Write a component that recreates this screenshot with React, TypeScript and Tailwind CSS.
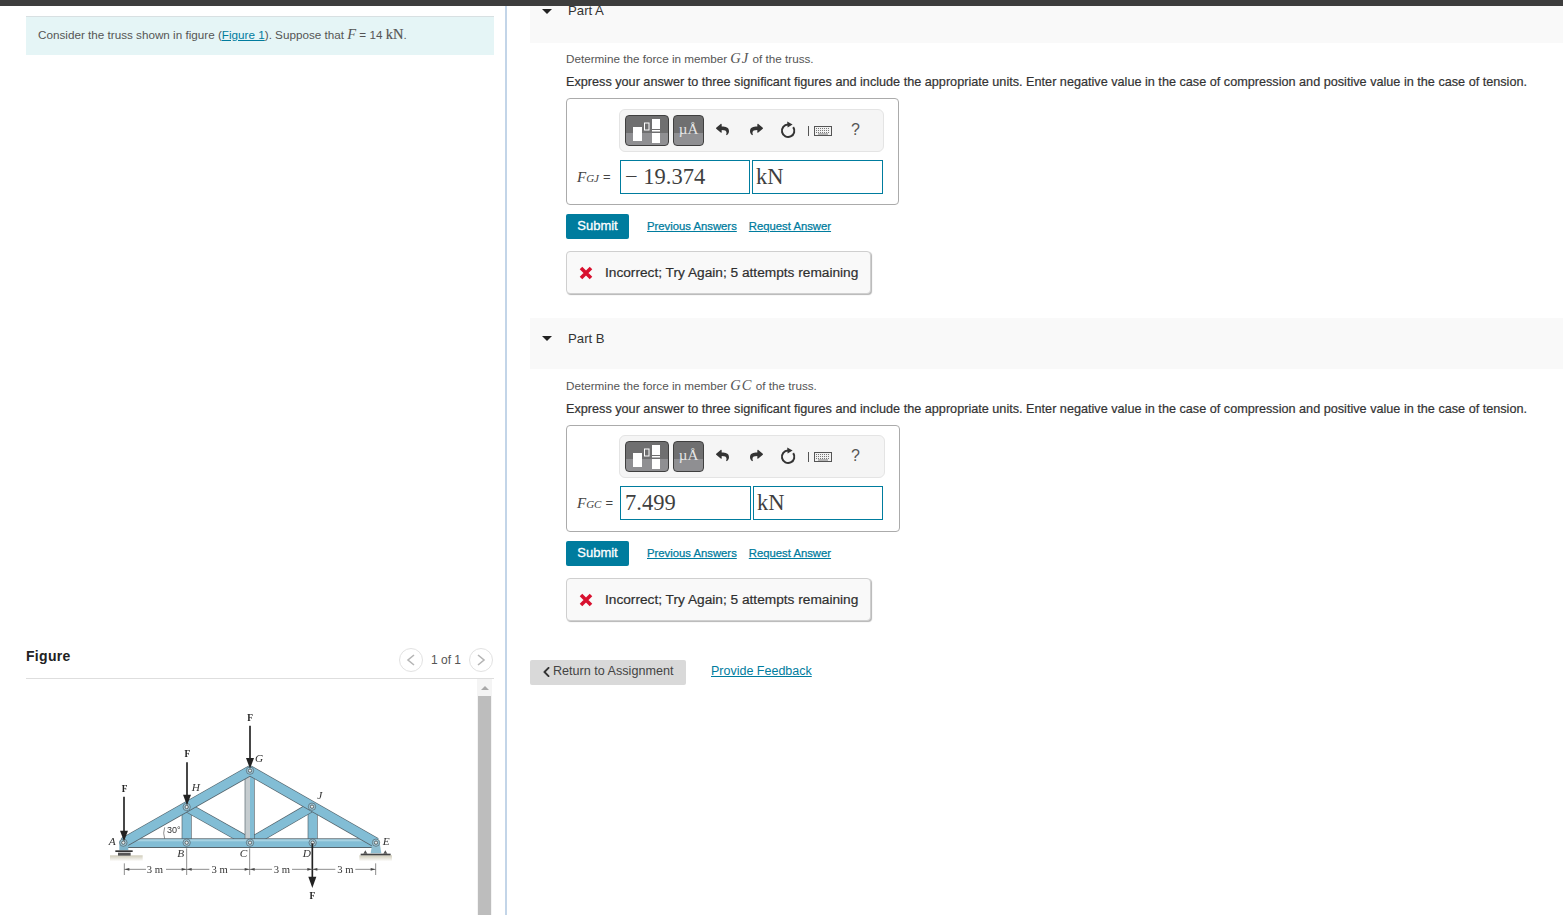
import { FaChevronLeft, FaReply, FaShare } from "react-icons/fa";

const SANS = "font-['Liberation_Sans',Arial,sans-serif]";
const SERIF = "font-['Liberation_Serif','Times_New_Roman',serif]";

function Mi({ children }: { children: string }) {
  return <span className={`${SERIF} text-[14.5px] italic leading-none tracking-[1px]`}>{children}</span>;
}

function TemplateIcons() {
  return (
    <div className="flex items-center gap-[4px]">
      <div className="relative flex h-[31px] w-[44px] items-center justify-center overflow-hidden rounded-[4px] border border-[#3f3f3f] bg-[linear-gradient(#6f6f70_0%,#6f6f70_58%,#8f8f92_58%,#8f8f92_100%)]">
        <svg width="30" height="26" viewBox="0 0 30 26">
          <rect x="1" y="9" width="9" height="14" fill="#fff" />
          <rect x="12.5" y="5" width="4.5" height="7" fill="none" stroke="#fff" strokeWidth="1" />
          <rect x="20" y="1" width="8" height="10" fill="#fff" />
          <rect x="20" y="12" width="8" height="1.5" fill="#fff" />
          <rect x="20" y="15" width="8" height="10" fill="#fff" />
        </svg>
      </div>
      <div className={`flex h-[31px] w-[31px] items-center justify-center rounded-[4px] border border-[#3f3f3f] bg-[linear-gradient(#6f6f70_0%,#6f6f70_58%,#8f8f92_58%,#8f8f92_100%)] ${SERIF} text-[15px] leading-none text-[#e6e6e6]`}>
        <span className="mb-[2px]">µÅ</span>
      </div>
    </div>
  );
}

function ResetIcon() {
  return (
    <svg width="16" height="18" viewBox="0 0 16 18" fill="none">
      <path d="M8 3.6 A6.2 6.2 0 1 0 13.2 6.2" stroke="#333" strokeWidth="2" />
      <path d="M7.2 0.4 L12.6 3.4 L7.6 6.6 Z" fill="#333" />
    </svg>
  );
}

function KeyboardIcon() {
  return (
    <svg width="24" height="12" viewBox="0 0 24 12" className="shrink-0">
      <rect x="0" y="1" width="1" height="10" fill="#555" />
      <rect x="6.5" y="1.5" width="17" height="9" fill="#f2f2f2" stroke="#555" />
      <path d="M8 3.5h14M8 5.5h14M8 7.5h14" stroke="#777" strokeWidth="1" strokeDasharray="1 1" />
      <rect x="10" y="8.5" width="10" height="1" fill="#777" />
    </svg>
  );
}

function AnswerBox({
  symbol,
  sub,
  value,
  inputWidth,
  unitWidth,
  boxClass,
  toolbarWidth,
}: {
  symbol: string;
  sub: string;
  value: string;
  inputWidth: string;
  unitWidth: string;
  boxClass: string;
  toolbarWidth: string;
}) {
  return (
    <div className={`${boxClass} h-[107px] rounded-[4px] border border-[#ababab] bg-white pl-[10px]`}>
      <div className={`ml-[42px] flex h-[43px] ${toolbarWidth} items-center rounded-[6px] border border-[#e4e4e4] bg-[#f5f5f5] pl-[5px]`}>
        <TemplateIcons />
        <FaReply className="mb-[2px] ml-[12px] h-[13px] w-[13px] text-[#333]" />
        <FaShare className="mb-[2px] ml-[21px] h-[13px] w-[13px] text-[#333]" />
        <div className="mb-[2px] ml-[17px]">
          <ResetIcon />
        </div>
        <div className="ml-[12px]">
          <KeyboardIcon />
        </div>
        <span className={`ml-[19px] mb-[2px] ${SANS} text-[16px] leading-none text-[#555]`}>?</span>
      </div>
      <div className="mt-[8px] flex h-[34px] items-center">
        <div className="flex w-[43px] items-center text-[#444]">
          <span className={`${SERIF} text-[15px] italic`}>{symbol}</span>
          <span className={`${SERIF} mt-[3px] text-[11px] italic`}>{sub}</span>
          <span className={`${SANS} ml-[4px] text-[13px]`}>=</span>
        </div>
        <div className={`${inputWidth} flex h-[34px] items-center border border-[#007c9e] pb-[1px] pl-[4px] ${SERIF} text-[22.5px] text-[#3f3f3f]`}>
          {value}
        </div>
        <div className={`${unitWidth} ml-[2px] flex h-[34px] items-center border border-[#007c9e] pb-[1px] pl-[3px] ${SERIF} text-[22.5px] text-[#3f3f3f]`}>
          kN
        </div>
      </div>
    </div>
  );
}

function SubmitRow() {
  return (
    <div className="flex h-[25px] items-center">
      <button type="button" className="h-[25px] w-[63px] rounded-[2px] bg-[#007c9e] pb-[2px] text-[13px] text-white [-webkit-text-stroke:0.3px_#fff]">
        Submit
      </button>
      <a className="ml-[18px] text-[11.3px] text-[#007c9e] underline [-webkit-text-stroke:0.25px_#007c9e]">Previous Answers</a>
      <a className="ml-[12px] text-[11.3px] text-[#007c9e] underline [-webkit-text-stroke:0.25px_#007c9e]">Request Answer</a>
    </div>
  );
}

function Feedback() {
  return (
    <div className="flex h-[43px] w-[305px] items-center rounded-[4px] border border-[#cfcfcf] bg-[#f9f9f9] pl-[12px] shadow-[1px_1px_1px_#b5b5b5]">
      <svg width="14" height="14" viewBox="0 0 14 14">
        <path d="M2 2 L12 12 M12 2 L2 12" stroke="#d8112f" strokeWidth="3.6" />
      </svg>
      <span className="ml-[12px] pt-[1px] text-[13.7px] text-[#2f2f2f] [-webkit-text-stroke:0.2px_#2f2f2f]">Incorrect; Try Again; 5 attempts remaining</span>
    </div>
  );
}

function Caret() {
  return <span className="h-0 w-0 border-x-[5px] border-t-[5px] border-x-transparent border-t-[#222]" />;
}

function Instructions({ member }: { member: string }) {
  return (
    <>
      <p className="h-[18px] text-[11.7px] leading-[18px] text-[#555]">
        Determine the force in member <Mi>{member}</Mi> of the truss.
      </p>
      <p className="mt-[5px] text-[12.67px] leading-[18px] text-[#333] [-webkit-text-stroke:0.2px_#333]">
        Express your answer to three significant figures and include the appropriate units. Enter negative value in the case of compression and positive value in the case of tension.
      </p>
    </>
  );
}

function Truss() {
  const blue = "#82bdd5";
  const edge = "#55646c";
  const members: [number, number, number, number][] = [
    [290, 321, 290, 428],
    [668, 320, 668, 428],
    [290, 321, 480, 428],
    [666, 320, 480, 428],
  ];
  const pins: [number, number][] = [
    [100, 428],
    [290, 428],
    [480, 428],
    [668, 428],
    [858, 428],
    [290, 321],
    [480, 212],
    [666, 320],
  ];
  const arrows: [number, number, number][] = [
    [102, 290, 424],
    [291, 187, 316],
    [480, 77, 206],
  ];
  return (
    <svg width="320" height="215" viewBox="0 0 960 645" className="blur-[0.3px]">
      <defs>
        <linearGradient id="ground" x1="0" y1="0" x2="0" y2="1">
          <stop offset="0" stopColor="#cfcbb8" />
          <stop offset="1" stopColor="#ffffff" />
        </linearGradient>
      </defs>
      <rect x="60" y="466" width="98" height="18" fill="url(#ground)" />
      <rect x="808" y="466" width="98" height="18" fill="url(#ground)" />
      {members.map(([x1, y1, x2, y2], i) => (
        <g key={i}>
          <line x1={x1} y1={y1} x2={x2} y2={y2} stroke={edge} strokeWidth="30" />
          <line x1={x1} y1={y1} x2={x2} y2={y2} stroke={blue} strokeWidth="26" />
        </g>
      ))}
      <rect x="464" y="212" width="30" height="216" fill={edge} />
      <rect x="466" y="212" width="14" height="216" fill="#c5cccf" />
      <rect x="480" y="212" width="12" height="216" fill={blue} />
      <rect x="100" y="415" width="758" height="29" fill={edge} />
      <rect x="100" y="418" width="758" height="23" fill={blue} />
      <rect x="100" y="418" width="758" height="6" fill="#a7d2e2" />
      <path d="M100 428 L480 212 L858 428" fill="none" stroke={edge} strokeWidth="31" strokeLinejoin="round" />
      <path d="M100 428 L480 212 L858 428" fill="none" stroke={blue} strokeWidth="27" strokeLinejoin="round" />
      <rect x="88" y="422" width="27" height="29" fill="#7fb4ca" />
      <rect x="76" y="451" width="52" height="5" fill="#333" />
      <rect x="84" y="458" width="38" height="9" fill="#555" />
      <path d="M842 460 L848 422 L868 422 L874 460 Z" fill="#8fbfd2" />
      <rect x="812" y="461" width="90" height="5" fill="#444" />
      <path d="M820 461 l6 -10 l6 10 Z M880 461 l6 -10 l6 10 Z" fill="#555" />
      {pins.map(([x, y], i) => (
        <g key={i}>
          <circle cx={x} cy={y} r="11" fill="#9cc7d8" stroke="#4f5f68" strokeWidth="2" />
          <circle cx={x} cy={y} r="5" fill="#e6eef0" stroke="#333" strokeWidth="2" />
        </g>
      ))}
      {arrows.map(([x, y1, y2], i) => (
        <g key={i}>
          <line x1={x} y1={y1} x2={x} y2={y2 - 20} stroke="#222" strokeWidth="5" />
          <path d={`M${x - 12} ${y2 - 32} L${x + 12} ${y2 - 32} L${x} ${y2} Z`} fill="#222" />
        </g>
      ))}
      <line x1="667" y1="430" x2="667" y2="540" stroke="#222" strokeWidth="5" />
      <path d="M655 530 L679 530 L667 564 Z" fill="#222" />
      <g stroke="#555" strokeWidth="2">
        <line x1="103" y1="490" x2="103" y2="525" />
        <line x1="290" y1="445" x2="290" y2="525" />
        <line x1="479" y1="445" x2="479" y2="525" />
        <line x1="857" y1="490" x2="857" y2="525" />
        <line x1="103" y1="508" x2="168" y2="508" />
        <line x1="228" y1="508" x2="358" y2="508" />
        <line x1="420" y1="508" x2="546" y2="508" />
        <line x1="606" y1="508" x2="736" y2="508" />
        <line x1="796" y1="508" x2="857" y2="508" />
        <path d="M224 382 Q 218 400 224 416" fill="none" />
      </g>
      <path d="M104 508 l14 -4 v8 Z M289 508 l-14 -4 v8 Z M291 508 l14 -4 v8 Z M478 508 l-14 -4 v8 Z M480 508 l14 -4 v8 Z M666 508 l-14 -4 v8 Z M668 508 l14 -4 v8 Z M856 508 l-14 -4 v8 Z" fill="#444" />
      <g className={SERIF} fill="#333">
        <text x="195" y="518" fontSize="32" textAnchor="middle">3 m</text>
        <text x="389" y="518" fontSize="32" textAnchor="middle">3 m</text>
        <text x="576" y="518" fontSize="32" textAnchor="middle">3 m</text>
        <text x="766" y="518" fontSize="32" textAnchor="middle">3 m</text>
        <g fontStyle="italic" fontSize="34">
          <text x="56" y="434">A</text>
          <text x="262" y="470">B</text>
          <text x="449" y="470">C</text>
          <text x="638" y="470">D</text>
          <text x="878" y="434">E</text>
          <text x="495" y="186">G</text>
          <text x="305" y="273">H</text>
          <text x="682" y="298">J</text>
        </g>
        <g fontWeight="700" fontSize="28" textAnchor="middle" fill="#222">
          <text x="104" y="277">F</text>
          <text x="292" y="172">F</text>
          <text x="480" y="63">F</text>
          <text x="667" y="598">F</text>
        </g>
      </g>
      <text x="231" y="399" fontSize="27" fill="#333" fontFamily="Liberation Sans">30°</text>
    </svg>
  );
}

function FigurePanel() {
  return (
    <div className="mt-[590px] w-[468px]">
      <div className="flex h-[34px] items-center border-b border-[#dedede] pb-[3px] pr-[1px]">
        <span className="mb-[8px] text-[14px] font-bold tracking-[0.3px] text-[#222]">Figure</span>
        <div className="ml-auto flex items-center">
          <span className="flex h-[24px] w-[24px] items-center justify-center rounded-full border border-[#e2e2e2] text-[15px] leading-none text-[#bbb]">
            <svg width="10" height="12" viewBox="0 0 10 12" fill="none"><path d="M8 1 L2 6 L8 11" stroke="#b5b5b5" strokeWidth="1.6" /></svg>
          </span>
          <span className="mx-[8px] text-[12px] text-[#555]">1 of 1</span>
          <span className="flex h-[24px] w-[24px] items-center justify-center rounded-full border border-[#e2e2e2]">
            <svg width="10" height="12" viewBox="0 0 10 12" fill="none"><path d="M2 1 L8 6 L2 11" stroke="#b5b5b5" strokeWidth="1.6" /></svg>
          </span>
        </div>
      </div>
      <div className="flex h-[300px]">
        <div className="w-[450px] pl-[64px] pt-[21px]">
          <Truss />
        </div>
        <div className="ml-[1px] flex h-full w-[15px] flex-col items-center bg-[#f4f4f4]">
          <span className="mt-[7px] h-0 w-0 border-x-[4px] border-b-[4px] border-x-transparent border-b-[#a8a8a8]" />
          <div className="mt-[6px] h-full w-[13px] bg-[#bdbdbd]" />
        </div>
      </div>
    </div>
  );
}

export default function App() {
  return (
    <div className={`flex h-[915px] w-[1563px] flex-col overflow-hidden bg-white ${SANS}`}>
      <div className="h-[6px] shrink-0 bg-[#3d3d3d]" />
      <div className="flex min-h-0 flex-1">
        <aside className="w-[507px] shrink-0 border-r-2 border-[#c3d5e8] pl-[26px] pt-[10px]">
          <div className="flex h-[39px] w-[468px] items-center border-t border-[#d8e0e2] bg-[#e5f5f6] pb-[2px] pl-[12px] text-[11.7px] text-[#555]">
            <span>
              Consider the truss shown in figure (<a className="text-[#007c9e] underline">Figure 1</a>). Suppose that{" "}
              <span className={`${SERIF} text-[14.5px] italic`}>F</span> = 14{" "}
              <span className={`${SERIF} text-[14.5px] [-webkit-text-stroke:0.2px_#555]`}>kN</span>.
            </span>
          </div>
          <FigurePanel />
        </aside>

        <main className="min-w-0 flex-1 pl-[23px]">
          <div className="h-[37px] bg-[#f9f9f9] pl-[12px]">
            <div className="flex h-[10px] items-center">
              <Caret />
              <span className="ml-[16px] text-[13.2px] text-[#333]">Part A</span>
            </div>
          </div>
          <div className="pl-[36px] pt-[7px]">
            <Instructions member="GJ" />
            <div className="mt-[7px]">
              <AnswerBox symbol="F" sub="GJ" value="− 19.374" inputWidth="w-[130px]" unitWidth="w-[131px]" boxClass="w-[333px] pt-[10px]" toolbarWidth="w-[265px]" />
            </div>
            <div className="mt-[9px]">
              <SubmitRow />
            </div>
            <div className="mt-[12px]">
              <Feedback />
            </div>
          </div>

          <div className="mt-[24px] flex h-[51px] items-start bg-[#f9f9f9] pl-[12px] pt-[11px]">
            <div className="flex h-[18px] items-center">
              <Caret />
              <span className="ml-[16px] pt-[1px] text-[13.2px] text-[#333]">Part B</span>
            </div>
          </div>
          <div className="pl-[36px] pt-[8px]">
            <Instructions member="GC" />
            <div className="mt-[7px]">
              <AnswerBox symbol="F" sub="GC" value="7.499" inputWidth="w-[131px]" unitWidth="w-[130px]" boxClass="w-[334px] pt-[9px]" toolbarWidth="w-[266px]" />
            </div>
            <div className="mt-[9px]">
              <SubmitRow />
            </div>
            <div className="mt-[12px]">
              <Feedback />
            </div>
          </div>

          <div className="mt-[39px] flex items-center">
            <button type="button" className="flex h-[25px] w-[156px] items-center rounded-[2px] bg-[#d9d9d9] pb-[2px] pl-[12px] text-[12.6px] text-[#444]">
              <FaChevronLeft className="h-[12px] w-[9px] text-[#333]" />
              <span className="ml-[2px]">Return to Assignment</span>
            </button>
            <a className="mb-[2px] ml-[25px] text-[12.5px] text-[#007c9e] underline">Provide Feedback</a>
          </div>
        </main>
      </div>
    </div>
  );
}
